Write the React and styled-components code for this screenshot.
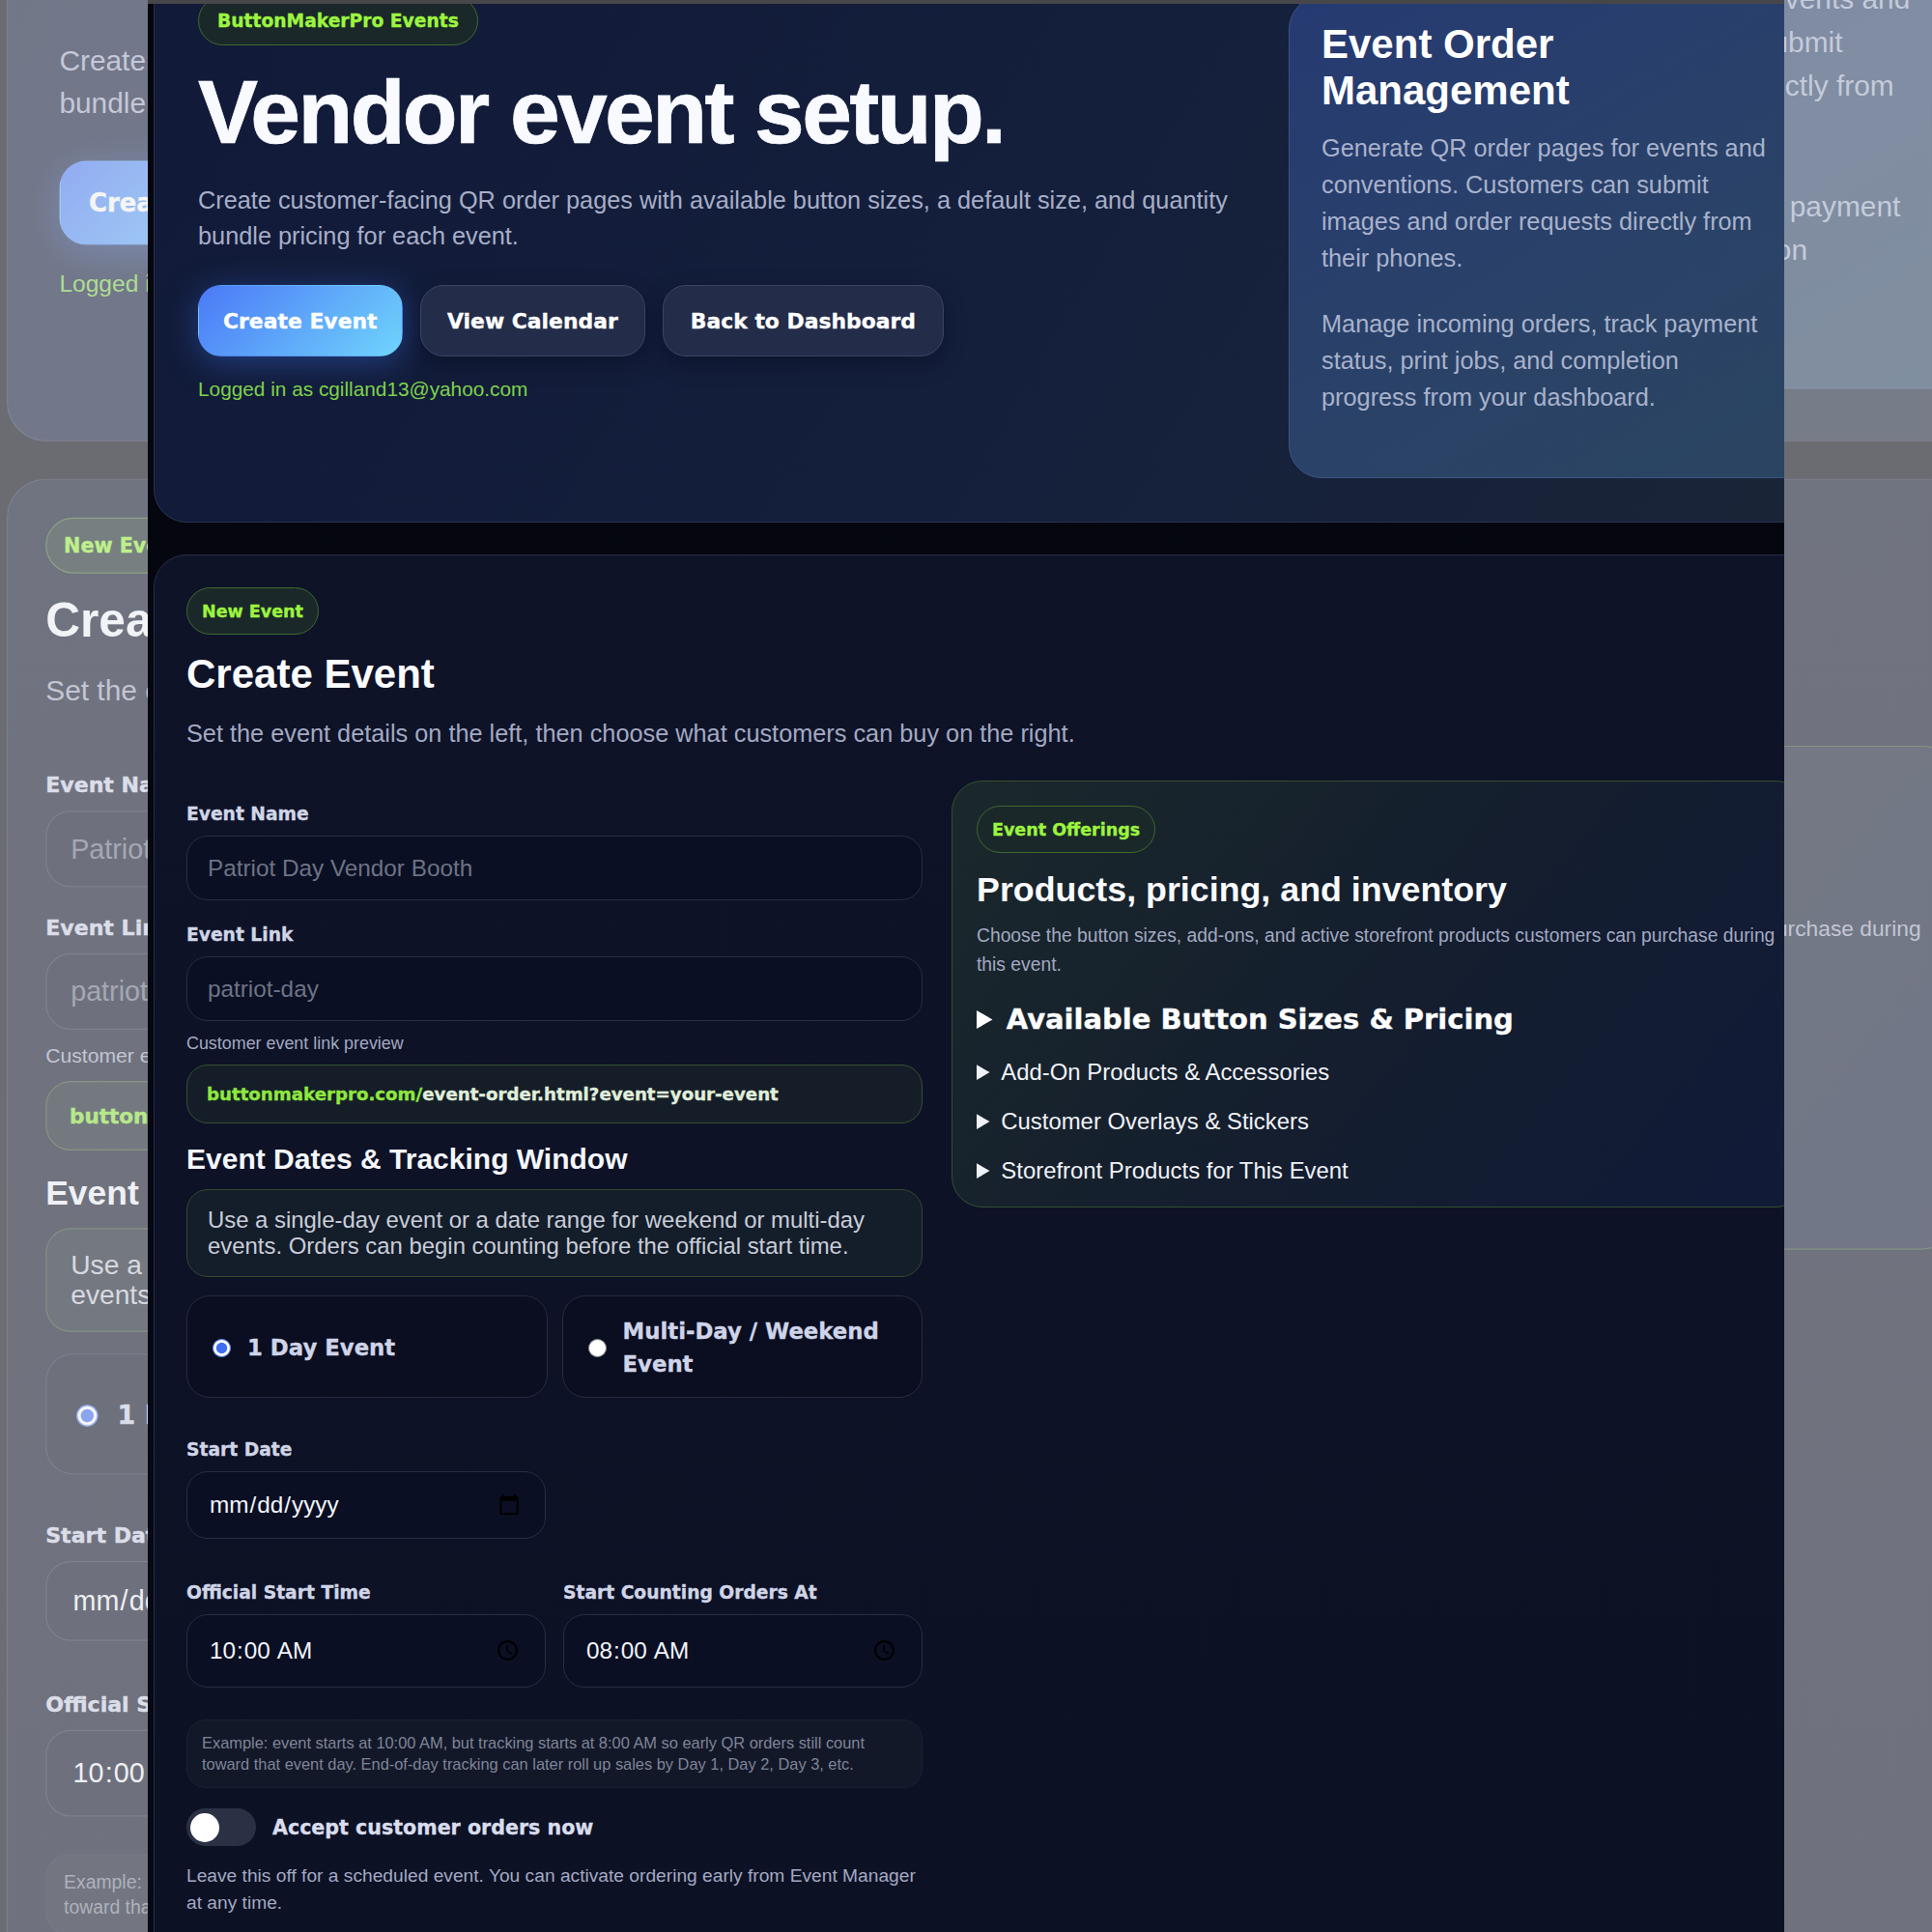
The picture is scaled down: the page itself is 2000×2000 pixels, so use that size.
import React from "react";
import styled, { createGlobalStyle, css } from "styled-components";

const Global = createGlobalStyle`
  html, body { margin: 0; background: #000; }
  * { box-sizing: border-box; }
`;

const sans = `"Liberation Sans", Arial, sans-serif`;

const heavy = css`
  font-family: "DejaVu Sans", Verdana, sans-serif;
  font-weight: 700;
  -webkit-text-stroke: 0.35px currentColor;
`;

const Stage = styled.div`
  position: relative;
  width: 2000px;
  height: 2000px;
  overflow: hidden;
  font-family: ${sans};
`;

const Backdrop = styled.div`
  position: absolute;
  left: 0;
  top: -182.5px;
  width: 1694px;
  height: 1900px;
  overflow: hidden;
  transform-origin: 0 0;
  transform: scale(1.1806);
`;

const Scrim = styled.div`
  position: absolute;
  inset: 0;
  background: rgba(232, 232, 234, 0.45);
`;

const Frame = styled.div`
  position: absolute;
  left: 153px;
  top: 0;
  width: 1694px;
  height: 2000px;
  overflow: hidden;
  background: #05070f;
`;

const TopEdge = styled.div`
  position: absolute;
  left: 0;
  top: 0;
  width: 100%;
  height: 4px;
  background: #47474a;
`;

const Page = styled.div`
  width: 1694px;
  margin-top: -40px;
  padding-left: 6px;
  background: linear-gradient(180deg, #04050d, #070a15);
`;

const Hero = styled.section`
  display: grid;
  grid-template-columns: 1083px 600px;
  column-gap: 46px;
  width: 1800px;
  padding: 35px 30px 45px 45px;
  border: 1px solid #2a3150;
  border-radius: 34px;
  background: linear-gradient(120deg, #111a38 0%, #141f3c 50%, #1a2537 100%);
`;

const Pill = styled.span`
  display: flex;
  align-items: center;
  width: fit-content;
  height: ${(p) => p.$h || 49}px;
  padding: 0 ${(p) => p.$pad || 15}px;
  border: 1px solid #3f6a2f;
  border-radius: 999px;
  background: #1b2829;
  color: #9cf53f;
  ${heavy}
  font-size: ${(p) => p.$size || 17.5}px;
`;

const Title = styled.h1`
  margin: 23px 0 0;
  color: #f8faff;
  font-size: 93px;
  line-height: 93px;
  font-weight: 700;
  letter-spacing: -2.6px;
  -webkit-text-stroke: 0.7px currentColor;
`;

const Lead = styled.p`
  margin: 26px 0 0;
  max-width: 1090px;
  color: #a7aec8;
  font-size: 25.3px;
  line-height: 37px;
`;

const ButtonRow = styled.div`
  display: flex;
  gap: 18px;
  margin-top: 32px;
`;

const Button = styled.button`
  height: 74px;
  padding: 0 ${(p) => (p.$primary ? 25 : 27.5)}px;
  border: 1px solid ${(p) => (p.$primary ? "transparent" : "#3c4463")};
  border-radius: 24px;
  background: ${(p) => (p.$primary ? "linear-gradient(135deg, #4b79f7, #70d4fc)" : "#232c49")};
  box-shadow: ${(p) => (p.$primary ? "0 6px 34px rgba(60, 115, 240, 0.4)" : "0 8px 22px rgba(4, 7, 20, 0.35)")};
  color: #fff;
  ${heavy}
  font-size: 21.9px;
`;

const LoggedIn = styled.div`
  margin-top: 22px;
  color: #7fd24c;
  font-size: 20.8px;
  line-height: 24px;
`;

const SidePanel = styled.aside`
  min-height: 499px;
  padding: 26px 96px 0 33px;
  border: 1px solid #3a5384;
  border-radius: 34px;
  background: linear-gradient(150deg, #263a72 0%, #2a4268 55%, #2b4560 100%);
`;

const SideTitle = styled.h2`
  margin: -1px 0 0;
  color: #fff;
  font-size: 42px;
  line-height: 47.6px;
  font-weight: 700;
`;

const SideText = styled.p`
  margin: ${(p) => p.$mt}px 0 0;
  color: #a8b2cc;
  font-size: 25.3px;
  line-height: 38px;
`;

const Section = styled.section`
  width: 1742px;
  margin-top: 33px;
  padding: 33px 30px 60px 33px;
  border: 1px solid #272d47;
  border-radius: 34px;
  background: linear-gradient(180deg, #0e1328, #0c1124);
`;

const SectionTitle = styled.h2`
  margin: 16px 0 0;
  color: #fafbff;
  font-size: 42px;
  line-height: 50px;
  font-weight: 700;
`;

const SectionText = styled.p`
  margin: 19px 0 0;
  color: #a3a9c2;
  font-size: 25.3px;
  line-height: 34px;
`;

const Columns = styled.div`
  display: grid;
  grid-template-columns: 762px 1fr;
  column-gap: 30px;
  align-items: start;
  margin-top: 32px;
`;

const FormColumn = styled.form`
  display: block;
  padding-top: 22px;
`;

const Label = styled.label`
  display: block;
  margin: ${(p) => p.$mt || 0}px 0 9px;
  color: #d0d5e6;
  ${heavy}
  font-size: 18.7px;
  line-height: 26px;
`;

const Input = styled.input`
  display: block;
  width: 100%;
  height: ${(p) => p.$h || 67}px;
  padding: 0 21px;
  border: 1px solid #272d45;
  border-radius: 22px;
  background: #0a0f23;
  color: #f2f4fb;
  font-family: ${sans};
  font-size: 24.3px;
  outline: none;
  &::placeholder {
    color: #6d7385;
  }
  &[type="date"],
  &[type="time"] {
    padding: 0 23px 0 22px;
  }
`;

const Hint = styled.div`
  margin-top: 13px;
  color: #a3a9c2;
  font-size: 17.9px;
  line-height: 20px;
`;

const LinkBox = styled.div`
  display: flex;
  align-items: center;
  height: 61px;
  margin-top: 12px;
  padding: 0 20px;
  border: 1px solid #35512f;
  border-radius: 22px;
  background: #151e28;
  color: #e0efdc;
  ${heavy}
  font-size: 18.2px;
`;

const LinkHost = styled.span`
  color: #8fe83f;
`;

const SubHeading = styled.h3`
  margin: 19px 0 0;
  color: #f4f6fc;
  font-size: 30px;
  line-height: 36px;
  font-weight: 700;
`;

const InfoBox = styled.div`
  height: 91px;
  margin-top: 13px;
  padding: 17px 21px 0;
  border: 1px solid #32492e;
  border-radius: 22px;
  background: #141d2a;
  color: #c9cdd9;
  font-size: 23.9px;
  line-height: 27px;
`;

const RadioRow = styled.div`
  display: grid;
  grid-template-columns: 1fr 1fr;
  gap: 15px;
  margin-top: 19px;
`;

const RadioCard = styled.label`
  display: flex;
  align-items: center;
  gap: 17px;
  height: 106px;
  padding: 2px 26px 0;
  border: 1px solid #252b42;
  border-radius: 24px;
  background: #0a0e20;
  color: #cfd4e8;
  ${heavy}
  font-size: 22.8px;
  line-height: 34px;
`;

const RadioDot = styled.input`
  flex: none;
  width: 19px;
  height: 19px;
  margin: 0;
  accent-color: #3f6ef2;
`;

const FieldRow = styled.div`
  display: grid;
  grid-template-columns: 372px 372px;
  column-gap: 18px;
  margin-top: ${(p) => p.$mt || 0}px;
`;

const ExampleBox = styled.div`
  height: 71px;
  margin-top: 33px;
  padding: 12px 15px 0;
  border: 1px solid #1b2034;
  border-radius: 20px;
  background: #131829;
  color: #7f8598;
  font-size: 16.4px;
  line-height: 22px;
`;

const ToggleRow = styled.div`
  display: flex;
  align-items: center;
  gap: 17px;
  margin-top: 21px;
`;

const Track = styled.div`
  display: flex;
  align-items: center;
  width: 72px;
  height: 39px;
  padding-left: 4px;
  border-radius: 999px;
  background: #2a3145;
`;

const Knob = styled.div`
  width: 30px;
  height: 30px;
  border-radius: 50%;
  background: #fff;
`;

const ToggleText = styled.span`
  color: #d9dded;
  ${heavy}
  font-size: 20.6px;
`;

const FootNote = styled.p`
  margin: 17px 0 0;
  color: #a3a9c2;
  font-size: 19.2px;
  line-height: 28px;
`;

const OfferCard = styled.div`
  height: 442px;
  padding: 25px 25px 0;
  border: 1px solid #33502f;
  border-radius: 32px;
  background: linear-gradient(130deg, #1b282b 0%, #141e2e 50%, #111a38 100%);
`;

const OfferTitle = styled.h2`
  margin: 16px 0 0;
  color: #fafbff;
  font-size: 35.8px;
  line-height: 44px;
  font-weight: 700;
`;

const OfferText = styled.p`
  margin: 11px 0 0;
  max-width: 840px;
  color: #a3a9c2;
  font-size: 19.3px;
  line-height: 29.5px;
`;

const Disclosure = styled.details`
  margin-top: ${(p) => p.$mt}px;
  color: #f0f2f8;
  font-size: 23.9px;
  line-height: 30px;
`;

const LeadSummary = styled.summary`
  color: #fff;
  ${heavy}
  font-size: 29px;
  line-height: 36px;
`;

function Content({ group }) {
  return (
    <Page>
      <Hero>
        <div>
          <Pill $size={18.7} $pad={19} $h={51}>ButtonMakerPro Events</Pill>
          <Title>Vendor event setup.</Title>
          <Lead>
            Create customer-facing QR order pages with available button sizes, a default size, and quantity bundle pricing for each event.
          </Lead>
          <ButtonRow>
            <Button type="button" $primary>Create Event</Button>
            <Button type="button">View Calendar</Button>
            <Button type="button">Back to Dashboard</Button>
          </ButtonRow>
          <LoggedIn>Logged in as cgilland13@yahoo.com</LoggedIn>
        </div>
        <SidePanel>
          <SideTitle>Event Order Management</SideTitle>
          <SideText $mt={17}>
            Generate QR order pages for events and conventions. Customers can submit images and order requests directly from their phones.
          </SideText>
          <SideText $mt={30}>
            Manage incoming orders, track payment status, print jobs, and completion progress from your dashboard.
          </SideText>
        </SidePanel>
      </Hero>

      <Section>
        <Pill>New Event</Pill>
        <SectionTitle>Create Event</SectionTitle>
        <SectionText>Set the event details on the left, then choose what customers can buy on the right.</SectionText>
        <Columns>
          <FormColumn>
            <Label>Event Name</Label>
            <Input placeholder="Patriot Day Vendor Booth" />
            <Label $mt={23}>Event Link</Label>
            <Input placeholder="patriot-day" />
            <Hint>Customer event link preview</Hint>
            <LinkBox>
              <LinkHost>buttonmakerpro.com/</LinkHost>event-order.html?event=your-event
            </LinkBox>
            <SubHeading>Event Dates &amp; Tracking Window</SubHeading>
            <InfoBox>
              Use a single-day event or a date range for weekend or multi-day events. Orders can begin counting before the official start time.
            </InfoBox>
            <RadioRow>
              <RadioCard>
                <RadioDot type="radio" name={group} defaultChecked />
                1 Day Event
              </RadioCard>
              <RadioCard>
                <RadioDot type="radio" name={group} />
                Multi-Day / Weekend Event
              </RadioCard>
            </RadioRow>
            <FieldRow $mt={41}>
              <div>
                <Label>Start Date</Label>
                <Input type="date" $h={70} />
              </div>
            </FieldRow>
            <FieldRow $mt={43}>
              <div>
                <Label>Official Start Time</Label>
                <Input type="time" defaultValue="10:00" $h={76} />
              </div>
              <div>
                <Label>Start Counting Orders At</Label>
                <Input type="time" defaultValue="08:00" $h={76} />
              </div>
            </FieldRow>
            <ExampleBox>
              Example: event starts at 10:00 AM, but tracking starts at 8:00 AM so early QR orders still count toward that event day. End-of-day tracking can later roll up sales by Day 1, Day 2, Day 3, etc.
            </ExampleBox>
            <ToggleRow>
              <Track><Knob /></Track>
              <ToggleText>Accept customer orders now</ToggleText>
            </ToggleRow>
            <FootNote>
              Leave this off for a scheduled event. You can activate ordering early from Event Manager at any time.
            </FootNote>
          </FormColumn>

          <OfferCard>
            <Pill>Event Offerings</Pill>
            <OfferTitle>Products, pricing, and inventory</OfferTitle>
            <OfferText>
              Choose the button sizes, add-ons, and active storefront products customers can purchase during this event.
            </OfferText>
            <Disclosure $mt={24}>
              <LeadSummary>Available Button Sizes &amp; Pricing</LeadSummary>
            </Disclosure>
            <Disclosure $mt={22}><summary>Add-On Products &amp; Accessories</summary></Disclosure>
            <Disclosure $mt={21}><summary>Customer Overlays &amp; Stickers</summary></Disclosure>
            <Disclosure $mt={21}><summary>Storefront Products for This Event</summary></Disclosure>
          </OfferCard>
        </Columns>
      </Section>
    </Page>
  );
}

export default function App() {
  return (
    <Stage>
      <Global />
      <Backdrop aria-hidden="true">
        <Content group="back-duration" />
      </Backdrop>
      <Scrim />
      <Frame>
        <Content group="duration" />
        <TopEdge />
      </Frame>
    </Stage>
  );
}
